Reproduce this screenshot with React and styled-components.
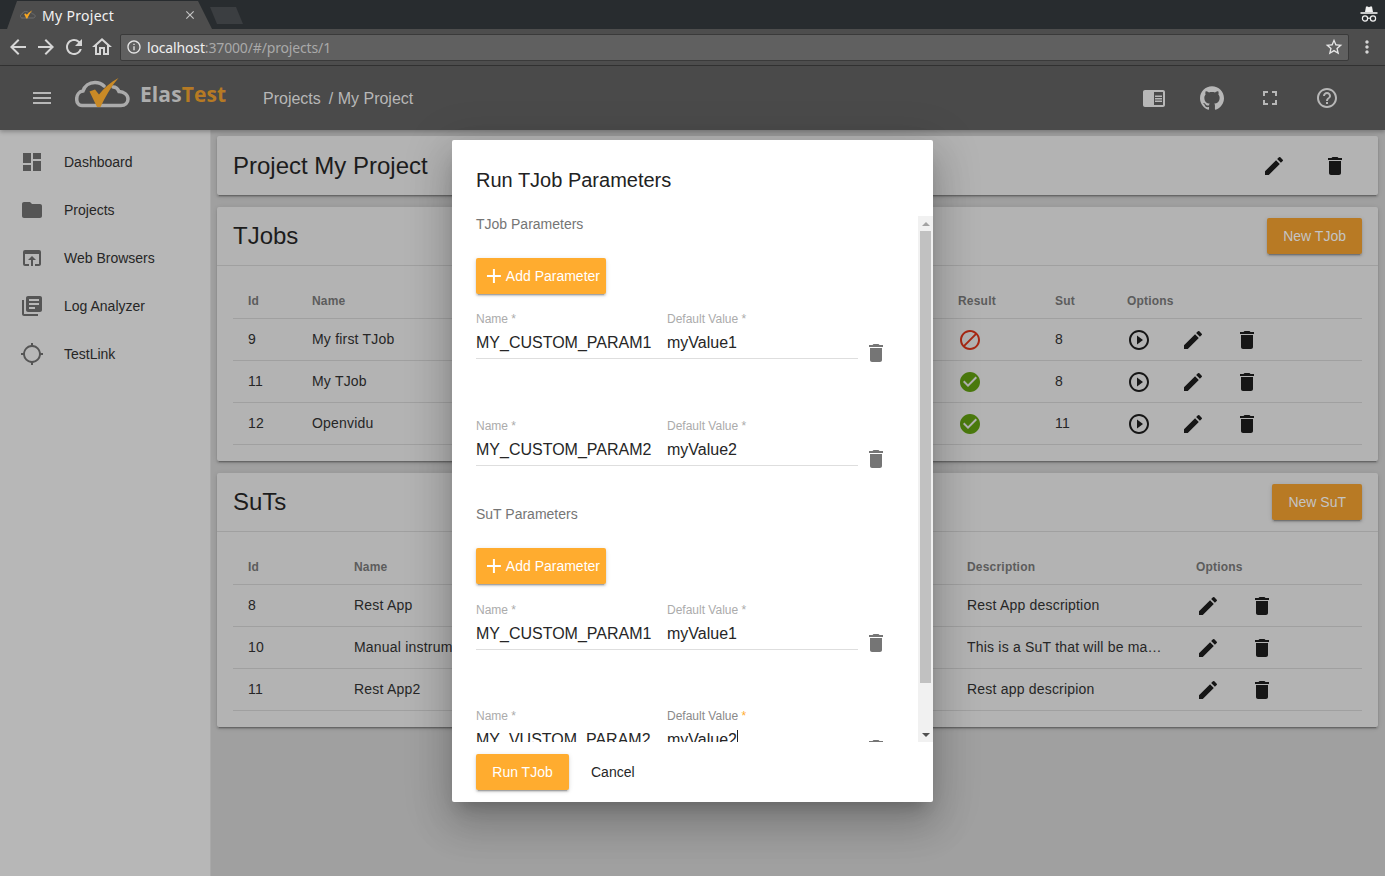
// App.jsx
import React from "react";
import styled, { createGlobalStyle } from "styled-components";
import {
  MdAdd,
  MdArrowBack,
  MdArrowForward,
  MdCheckCircle,
  MdChromeReaderMode,
  MdClose,
  MdDashboard,
  MdDelete,
  MdDoNotDisturbAlt,
  MdEdit,
  MdFolder,
  MdFullscreen,
  MdGpsNotFixed,
  MdHelpOutline,
  MdInfoOutline,
  MdLibraryBooks,
  MdMenu,
  MdMoreVert,
  MdOpenInBrowser,
  MdOutlineHome,
  MdPlayCircleOutline,
  MdRefresh,
  MdStarBorder,
} from "react-icons/md";
import { SiGithub } from "react-icons/si";

const GlobalStyle = createGlobalStyle`
  html, body {
    margin: 0;
    padding: 0;
    height: 100%;
    overflow: hidden;
    background: #a0a0a0;
    font-family: "Liberation Sans", Arial, sans-serif;
  }
  * {
    box-sizing: border-box;
  }
`;

const raised = `
  box-shadow: 0 3px 1px -2px rgba(0, 0, 0, 0.2), 0 2px 2px 0 rgba(0, 0, 0, 0.14),
    0 1px 5px 0 rgba(0, 0, 0, 0.12);
`;

const Page = styled.div`
  position: relative;
  width: 1385px;
  height: 876px;
  overflow: hidden;
  display: flex;
  flex-direction: column;
`;

/* browser chrome */
const TabStrip = styled.div`
  height: 29px;
  background: #282c2f;
  display: flex;
  align-items: flex-end;
  padding-left: 7px;
`;

const Tab = styled.div`
  width: 205px;
  height: 28px;
  background: #4d4d4d;
  clip-path: polygon(0 100%, 10px 0, 191px 0, 100% 100%);
  display: flex;
  align-items: center;
  padding: 0 15px 0 13px;
  font-family: "Noto Sans", sans-serif;
  font-size: 14px;
  letter-spacing: 0.3px;
  color: #f2f2f2;
  svg.close {
    margin-left: auto;
    color: #c4c4c4;
  }
`;

const TabTitle = styled.span`
  margin-left: 6px;
`;

const NewTab = styled.div`
  width: 33px;
  height: 17px;
  margin: 0 0 5px -2px;
  background: #3b3e41;
  clip-path: polygon(7px 100%, 0 0, 26px 0, 100% 100%);
`;

const Incognito = styled.svg`
  margin-left: auto;
  margin-right: 7px;
  align-self: center;
`;

const BrowserBar = styled.div`
  height: 37px;
  background: #4d4d4d;
  border-bottom: 1px solid #333;
  display: flex;
  align-items: center;
  padding: 0 8px 0 6px;
  color: #d6d6d6;
`;

const NavIcons = styled.div`
  display: flex;
  gap: 4px;
  margin-right: 6px;
  svg {
    display: block;
  }
`;

const UrlBox = styled.div`
  flex: 1;
  height: 27px;
  background: #606060;
  border: 1px solid #3a3a3a;
  border-radius: 2px;
  display: flex;
  align-items: center;
  padding: 0 4px 0 5px;
  font-family: "Noto Sans", sans-serif;
  font-size: 14px;
  letter-spacing: -0.15px;
  color: #a9a9a9;
  b {
    font-weight: 400;
    color: #efefef;
  }
`;

const UrlText = styled.span`
  margin-left: 5px;
`;

const StarIcon = styled(MdStarBorder)`
  margin-left: auto;
  color: #e6e6e6;
`;

const MoreButton = styled(MdMoreVert)`
  margin-left: 8px;
`;

/* app toolbar */
const Toolbar = styled.header`
  height: 64px;
  background: #4a4a4a;
  display: flex;
  align-items: center;
  padding-left: 30px;
  color: #b7b7b7;
  box-shadow: 0 2px 4px rgba(0, 0, 0, 0.25);
  position: relative;
  z-index: 1;
`;

const LogoWrap = styled.div`
  display: flex;
  align-items: center;
  margin-left: 21px;
  width: 188px;
  svg {
    margin-bottom: 6px;
  }
`;

const LogoText = styled.span`
  margin-left: 9px;
  margin-top: -8px;
  font-family: "Open Sans", sans-serif;
  font-weight: 700;
  font-size: 21px;
  letter-spacing: 0.1px;
  color: #adadad;
  em {
    font-style: normal;
    color: #b67a24;
  }
`;

const Crumbs = styled.div`
  margin-top: 1px;
  font-size: 16px;
  span {
    margin-left: 8px;
  }
`;

const ToolActions = styled.div`
  margin-left: auto;
  margin-right: 45px;
  display: flex;
  gap: 34px;
  svg {
    display: block;
  }
  svg:last-child {
    margin: 0 1px 0 -1px;
  }
`;

/* page layout */
const Body = styled.div`
  flex: 1;
  display: flex;
  min-height: 0;
`;

const Sidebar = styled.nav`
  width: 211px;
  background: #b7b7b7;
  border-right: 1px solid #a9a9a9;
  padding-top: 8px;
`;

const NavItem = styled.div`
  height: 48px;
  display: flex;
  align-items: center;
  padding-left: 20px;
  gap: 20px;
  font-size: 14px;
  color: #262626;
  svg {
    color: #555;
  }
`;

const Main = styled.main`
  flex: 1;
  padding: 6px 7px 0 6px;
  display: flex;
  flex-direction: column;
  gap: 12px;
`;

const Card = styled.section`
  background: #b3b3b3;
  border-radius: 2px;
  ${raised}
`;

const CardHeader = styled.div`
  height: 59px;
  display: flex;
  align-items: center;
  padding: 0 16px;
  border-bottom: ${(p) => (p.$ruled ? "1px solid #a0a0a0" : "none")};
`;

const CardTitle = styled.h2`
  margin: 0;
  font-size: 24px;
  font-weight: 400;
  color: #1c1c1c;
`;

const HeaderActions = styled.div`
  margin-left: auto;
  margin-right: 15px;
  display: flex;
  gap: 37px;
  color: #161616;
`;

const DarkButton = styled.div`
  margin-left: auto;
  height: 36px;
  padding: 0 16px;
  display: flex;
  align-items: center;
  font-size: 14px;
  color: #c4c4c4;
  background: #b87a24;
  border-radius: 2px;
  ${raised}
`;

const Table = styled.div`
  padding: 16px;
`;

const Row = styled.div`
  display: grid;
  grid-template-columns: ${(p) => p.$cols};
  height: ${(p) => (p.$head ? "37px" : "42px")};
  padding-left: 15px;
  align-items: center;
  border-bottom: 1px solid #a0a0a0;
  letter-spacing: 0.2px;
  font-size: ${(p) => (p.$head ? "12px" : "14px")};
  font-weight: ${(p) => (p.$head ? 700 : 400)};
  color: ${(p) => (p.$head ? "#5c5c5c" : "#262626")};
`;

const Cell = styled.div`
  white-space: nowrap;
  overflow: hidden;
  margin-top: -1px;
`;

const HeadCell = styled.div`
  white-space: nowrap;
  margin-top: 1px;
`;

const ResultIcon = styled.div`
  display: flex;
  color: ${(p) => (p.$ok ? "#4b7a0e" : "#a82814")};
`;

const Actions = styled.div`
  display: flex;
  gap: 30px;
  color: #161616;
`;

/* dialog */
const Overlay = styled.div`
  position: absolute;
  left: 0;
  right: 0;
  top: 66px;
  bottom: 0;
  z-index: 5;
  display: flex;
  align-items: center;
  justify-content: center;
`;

const Dialog = styled.div`
  width: 481px;
  height: 662px;
  background: #fff;
  border-radius: 2px;
  padding-top: 29px;
  display: flex;
  flex-direction: column;
  box-shadow: 0 11px 15px -7px rgba(0, 0, 0, 0.2), 0 24px 38px 3px rgba(0, 0, 0, 0.14),
    0 9px 46px 8px rgba(0, 0, 0, 0.12);
`;

const DialogTitle = styled.h2`
  margin: 0 0 24px 24px;
  font-size: 20px;
  font-weight: 400;
  line-height: 23px;
  color: #222;
`;

const DialogBody = styled.div`
  height: 526px;
  display: flex;
`;

const ScrollArea = styled.div`
  flex: 1;
  overflow: hidden;
  padding-left: 24px;
`;

const ScrollTrack = styled.div`
  width: 15px;
  background: #f1f1f1;
  display: flex;
  flex-direction: column;
  align-items: center;
`;

const ArrowSlot = styled.div`
  height: 15px;
  flex: none;
  display: flex;
  align-items: center;
  justify-content: center;
  &::before {
    content: "";
    border-left: 4px solid transparent;
    border-right: 4px solid transparent;
    ${(p) => (p.$up ? "border-bottom: 4px solid #a3a3a3;" : "border-top: 4px solid #505050;")}
  }
`;

const ScrollThumb = styled.div`
  width: 11px;
  height: 452px;
  background: #c1c1c1;
`;

const ScrollGap = styled.div`
  flex: 1;
`;

const SectionTitle = styled.div`
  font-size: 14px;
  line-height: 16px;
  color: #757575;
  margin-top: ${(p) => p.$top || 0}px;
`;

const AddButton = styled.div`
  width: 130px;
  height: 36px;
  margin-top: 26px;
  padding: 0 6px;
  display: flex;
  align-items: center;
  white-space: nowrap;
  background: #ffac2f;
  color: #fff;
  font-size: 14px;
  border-radius: 2px;
  ${raised}
`;

const ParamRow = styled.div`
  display: flex;
  align-items: flex-start;
  height: 46px;
  margin-top: ${(p) => p.$top}px;
`;

const Fields = styled.div`
  width: 382px;
  height: 46px;
  display: grid;
  grid-template-columns: 191px 191px;
  border-bottom: 1px solid ${(p) => (p.$focus ? "transparent" : "#dedede")};
`;

const Label = styled.div`
  font-size: 12px;
  line-height: 13px;
  color: ${(p) => (p.$focus ? "#8a8a8a" : "#ababab")};
  i {
    font-style: normal;
    color: ${(p) => (p.$focus ? "#ffac2f" : "inherit")};
  }
`;

const Value = styled.div`
  margin-top: 7px;
  font-size: 16px;
  line-height: 20px;
  color: #262626;
  white-space: nowrap;
`;

const Caret = styled.span`
  display: inline-block;
  width: 1px;
  height: 18px;
  background: #222;
  vertical-align: -3px;
`;

const TrashIcon = styled(MdDelete)`
  flex: none;
  margin: ${(p) => p.$top}px 0 0 6px;
  color: #757575;
`;

const DialogActions = styled.div`
  padding: 12px 24px 0;
  display: flex;
  gap: 6px;
`;

const RunButton = styled.div`
  width: 93px;
  height: 36px;
  display: flex;
  align-items: center;
  justify-content: center;
  font-size: 14px;
  color: #fff;
  background: #ffac2f;
  border-radius: 2px;
  ${raised}
`;

const TextButton = styled.div`
  height: 36px;
  padding: 0 16px;
  display: flex;
  align-items: center;
  font-size: 14px;
  color: #262626;
`;

const CloudLogo = ({ width = 56, height = 34, stroke = "#ababab", check = "#c98a26" }) => (
  <svg width={width} height={height} viewBox="0 0 56 34" fill="none">
    <path
      d="M7 27.5C3 27.5 1.7 24 1.7 21C1.7 17 4 13.5 8 13C9.5 8 14 4.5 20 4.5C24 4.5 27 6 29 8M38 9C41 9 43 11 44 13.5C49 13.5 53 17 53 21C53 25 50 27.5 46 27.5H7"
      stroke={stroke}
      strokeWidth="3.5"
      strokeLinecap="round"
    />
    <path d="M14.5 13.5L20 11.5L24 16.5C29 10 36 4 43.5 0C36.5 8 30.5 18 25.5 29H22Z" fill={check} />
  </svg>
);

const nav = [
  ["Dashboard", MdDashboard],
  ["Projects", MdFolder],
  ["Web Browsers", MdOpenInBrowser],
  ["Log Analyzer", MdLibraryBooks],
  ["TestLink", MdGpsNotFixed],
];

const tjobCols = "64px 646px 97px 72px 1fr";
const sutCols = "106px 613px 229px 1fr";

const tjobs = [
  { id: 9, name: "My first TJob", ok: false, sut: 8 },
  { id: 11, name: "My TJob", ok: true, sut: 8 },
  { id: 12, name: "Openvidu", ok: true, sut: 11 },
];

const suts = [
  { id: 8, name: "Rest App", desc: "Rest App description" },
  { id: 10, name: "Manual instrumentation", desc: "This is a SuT that will be ma…" },
  { id: 11, name: "Rest App2", desc: "Rest app descripion" },
];

const Param = ({ top, iconTop, name, value, focus }) => (
  <ParamRow $top={top}>
    <Fields $focus={focus}>
      <div>
        <Label>Name <i>*</i></Label>
        <Value>{name}</Value>
      </div>
      <div>
        <Label $focus={focus}>Default Value <i>*</i></Label>
        <Value>
          {value}
          {focus && <Caret />}
        </Value>
      </div>
    </Fields>
    <TrashIcon size={24} $top={iconTop} />
  </ParamRow>
);

const App = () => (
  <Page>
    <GlobalStyle />
    <TabStrip>
      <Tab>
        <CloudLogo width={16} height={10} stroke="#6e6e6e" check="#f5a623" />
        <TabTitle>My Project</TabTitle>
        <MdClose className="close" size={14} />
      </Tab>
      <NewTab />
      <Incognito width="18" height="20" viewBox="0 0 18 20" fill="none">
        <path d="M5 7L6 1.5H7.7L9 2.2L10.3 1.5H12L13 7Z" fill="#f2f2f2" />
        <rect x="0.5" y="7.2" width="17" height="1.6" fill="#f2f2f2" />
        <circle cx="5" cy="13.5" r="2.6" stroke="#f2f2f2" strokeWidth="1.2" />
        <circle cx="13" cy="13.5" r="2.6" stroke="#f2f2f2" strokeWidth="1.2" />
        <path d="M7.6 13.2H10.4" stroke="#f2f2f2" strokeWidth="1.1" />
      </Incognito>
    </TabStrip>
    <BrowserBar>
      <NavIcons>
        <MdArrowBack size={24} />
        <MdArrowForward size={24} />
        <MdRefresh size={24} />
        <MdOutlineHome size={24} />
      </NavIcons>
      <UrlBox>
        <MdInfoOutline size={16} color="#e6e6e6" />
        <UrlText>
          <b>localhost</b>:37000/#/projects/1
        </UrlText>
        <StarIcon size={20} />
      </UrlBox>
      <MoreButton size={20} />
    </BrowserBar>

    <Toolbar>
      <MdMenu size={24} />
      <LogoWrap>
        <CloudLogo />
        <LogoText>
          Elas<em>Test</em>
        </LogoText>
      </LogoWrap>
      <Crumbs>
        Projects<span>/ My Project</span>
      </Crumbs>
      <ToolActions>
        <MdChromeReaderMode size={24} />
        <SiGithub size={24} />
        <MdFullscreen size={24} />
        <MdHelpOutline size={24} />
      </ToolActions>
    </Toolbar>

    <Body>
      <Sidebar>
        {nav.map(([label, Icon]) => (
          <NavItem key={label}>
            <Icon size={24} />
            {label}
          </NavItem>
        ))}
      </Sidebar>
      <Main>
        <Card>
          <CardHeader>
            <CardTitle>Project My Project</CardTitle>
            <HeaderActions>
              <MdEdit size={24} />
              <MdDelete size={24} />
            </HeaderActions>
          </CardHeader>
        </Card>

        <Card>
          <CardHeader $ruled>
            <CardTitle>TJobs</CardTitle>
            <DarkButton>New TJob</DarkButton>
          </CardHeader>
          <Table>
            <Row $head $cols={tjobCols}>
              <HeadCell>Id</HeadCell>
              <HeadCell>Name</HeadCell>
              <HeadCell>Result</HeadCell>
              <HeadCell>Sut</HeadCell>
              <HeadCell>Options</HeadCell>
            </Row>
            {tjobs.map((job) => (
              <Row key={job.id} $cols={tjobCols}>
                <Cell>{job.id}</Cell>
                <Cell>{job.name}</Cell>
                <ResultIcon $ok={job.ok}>
                  {job.ok ? <MdCheckCircle size={24} /> : <MdDoNotDisturbAlt size={24} />}
                </ResultIcon>
                <Cell>{job.sut}</Cell>
                <Actions>
                  <MdPlayCircleOutline size={24} />
                  <MdEdit size={24} />
                  <MdDelete size={24} />
                </Actions>
              </Row>
            ))}
          </Table>
        </Card>

        <Card>
          <CardHeader $ruled>
            <CardTitle>SuTs</CardTitle>
            <DarkButton>New SuT</DarkButton>
          </CardHeader>
          <Table>
            <Row $head $cols={sutCols}>
              <HeadCell>Id</HeadCell>
              <HeadCell>Name</HeadCell>
              <HeadCell>Description</HeadCell>
              <HeadCell>Options</HeadCell>
            </Row>
            {suts.map((sut) => (
              <Row key={sut.id} $cols={sutCols}>
                <Cell>{sut.id}</Cell>
                <Cell>{sut.name}</Cell>
                <Cell>{sut.desc}</Cell>
                <Actions>
                  <MdEdit size={24} />
                  <MdDelete size={24} />
                </Actions>
              </Row>
            ))}
          </Table>
        </Card>
      </Main>
    </Body>

    <Overlay>
      <Dialog>
        <DialogTitle>Run TJob Parameters</DialogTitle>
        <DialogBody>
          <ScrollArea>
            <SectionTitle>TJob Parameters</SectionTitle>
            <AddButton>
              <MdAdd size={24} />
              Add Parameter
            </AddButton>
            <Param top={19} iconTop={28} name="MY_CUSTOM_PARAM1" value="myValue1" />
            <Param top={61} iconTop={27} name="MY_CUSTOM_PARAM2" value="myValue2" />
            <SectionTitle $top={40}>SuT Parameters</SectionTitle>
            <AddButton>
              <MdAdd size={24} />
              Add Parameter
            </AddButton>
            <Param top={20} iconTop={27} name="MY_CUSTOM_PARAM1" value="myValue1" />
            <Param top={60} iconTop={27} name="MY_VUSTOM_PARAM2" value="myValue2" focus />
          </ScrollArea>
          <ScrollTrack>
            <ArrowSlot $up />
            <ScrollThumb />
            <ScrollGap />
            <ArrowSlot />
          </ScrollTrack>
        </DialogBody>
        <DialogActions>
          <RunButton>Run TJob</RunButton>
          <TextButton>Cancel</TextButton>
        </DialogActions>
      </Dialog>
    </Overlay>
  </Page>
);

export default App;
